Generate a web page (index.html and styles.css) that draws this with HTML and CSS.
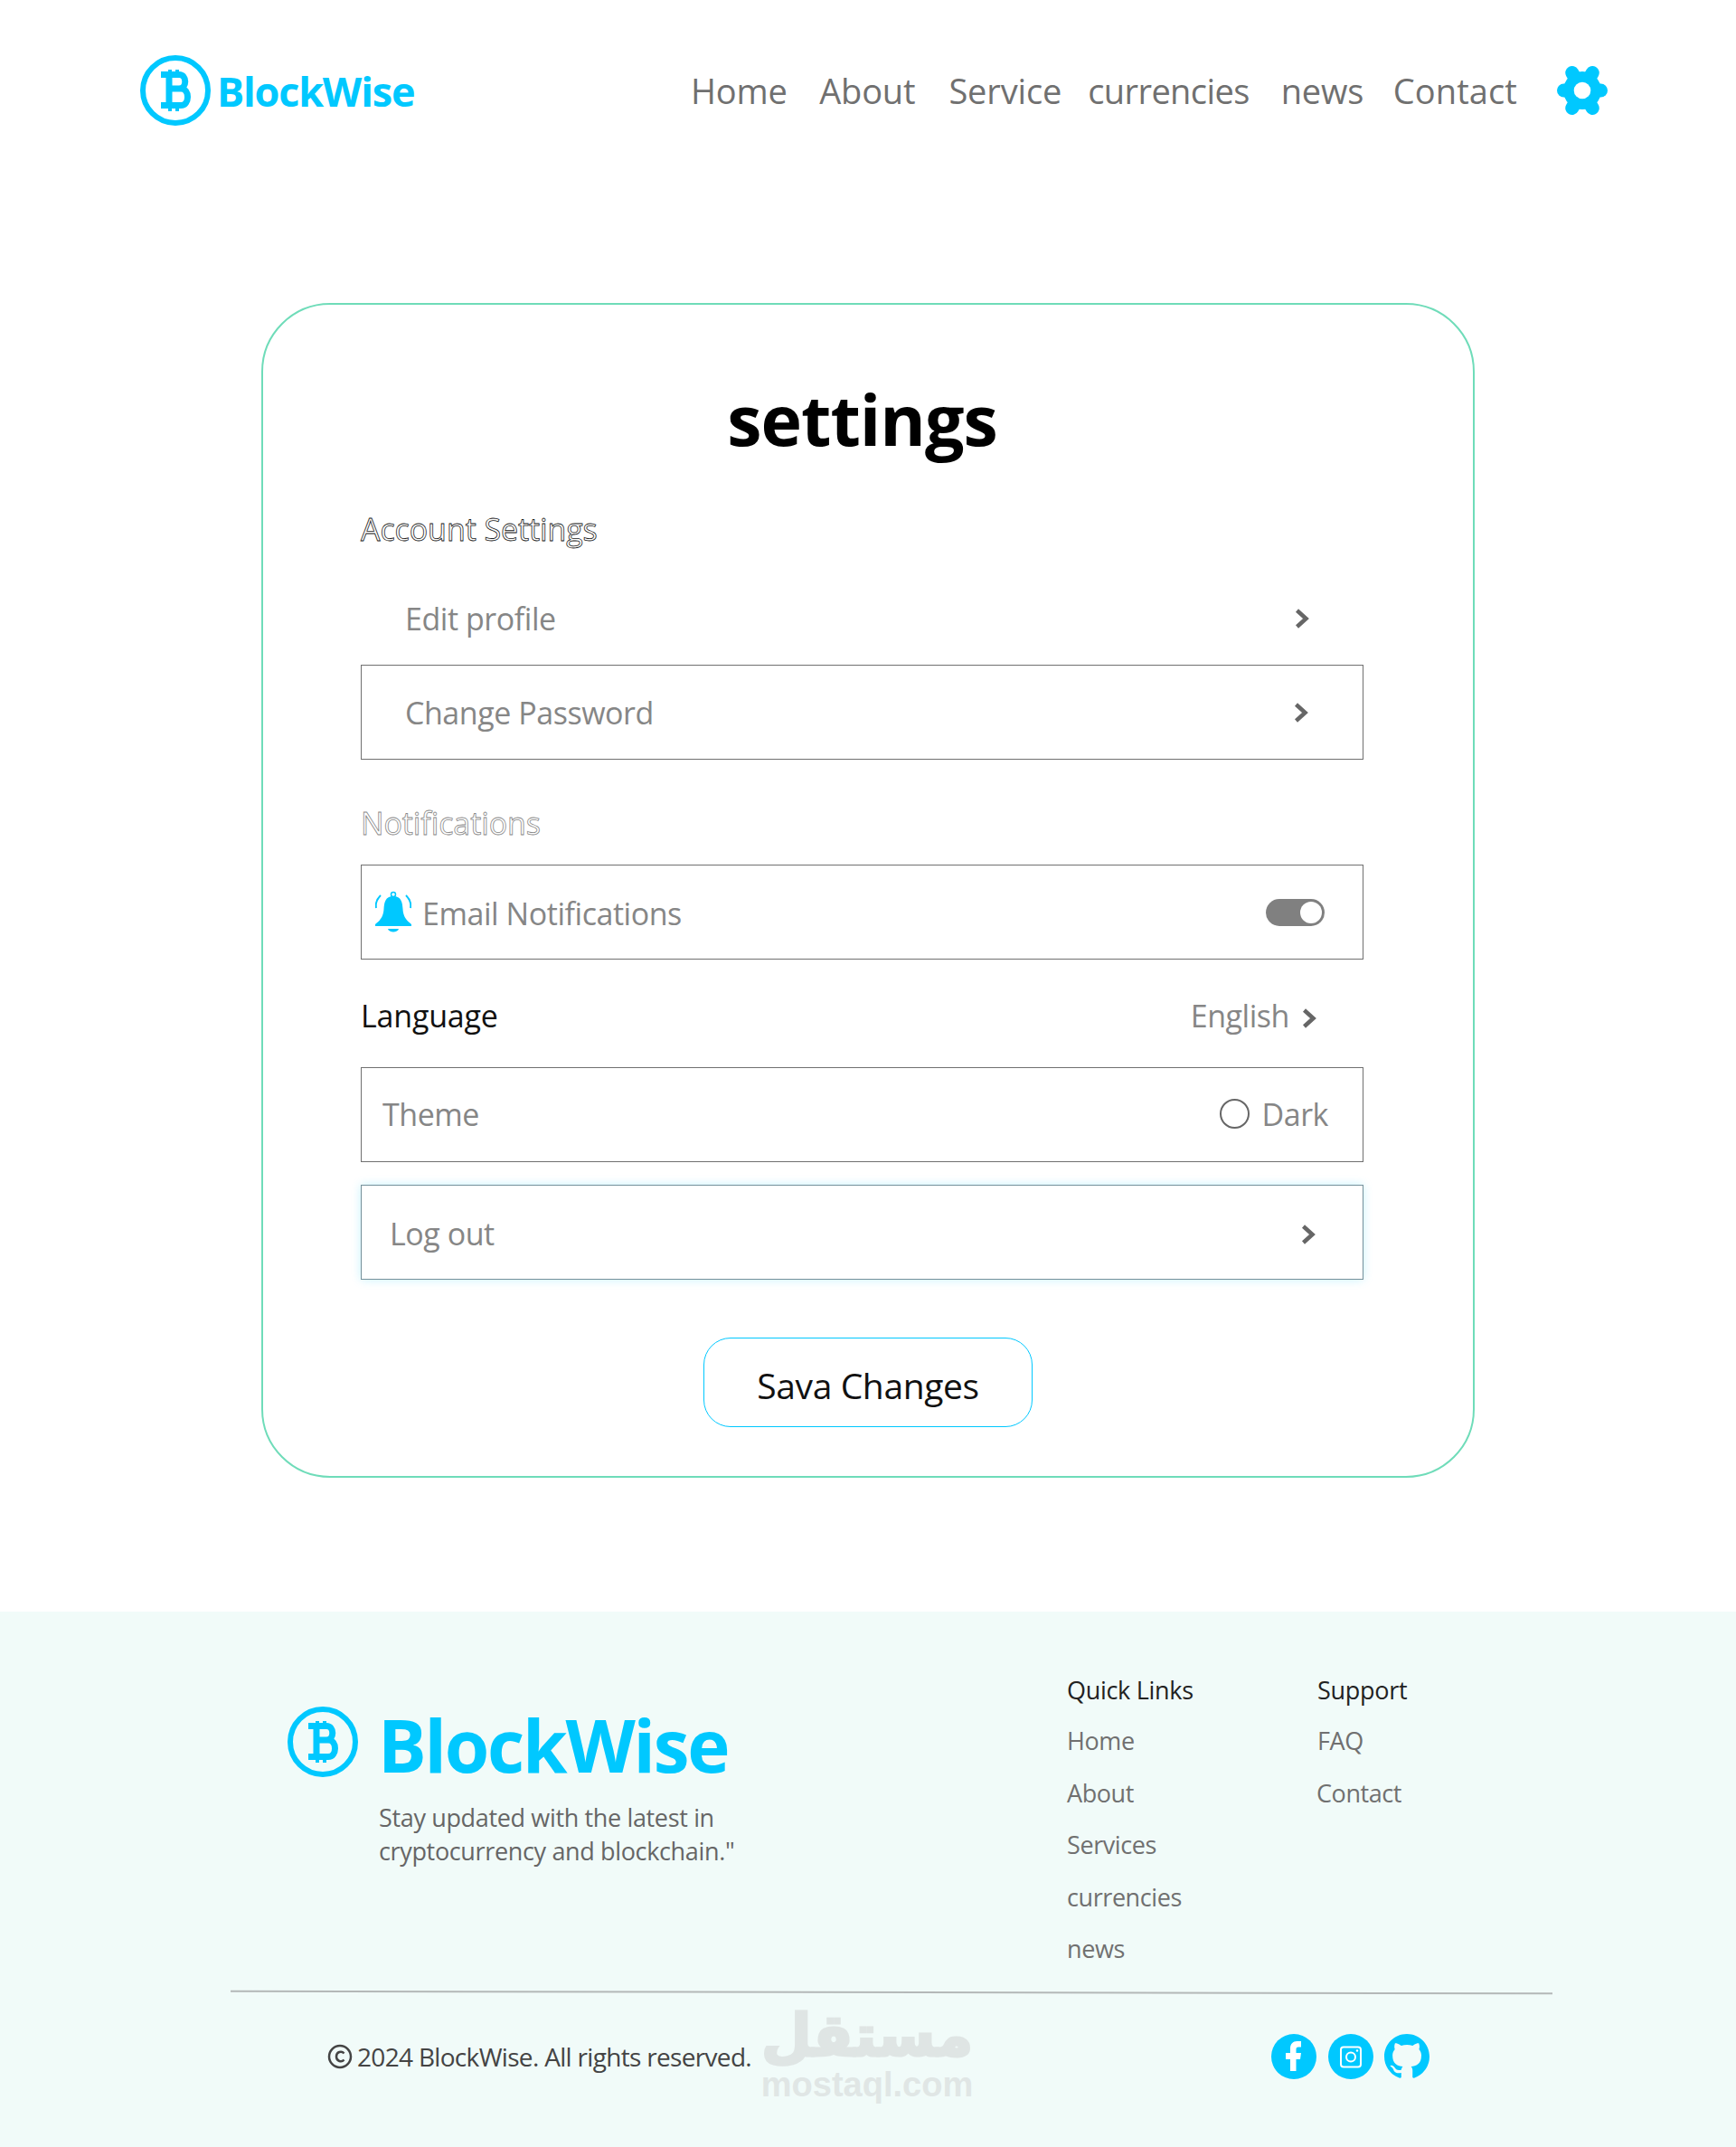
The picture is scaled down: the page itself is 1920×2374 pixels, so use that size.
FILE: index.html
```html
<!DOCTYPE html>
<html lang="en">
<head>
<meta charset="utf-8">
<title>BlockWise settings</title>
<link rel="stylesheet" href="styles.css">
</head>
<body>
<svg class="defs" width="0" height="0" aria-hidden="true">
  <symbol id="btc" viewBox="0 0 78 78">
    <circle cx="39" cy="39" r="36" fill="none" stroke="#00c8ff" stroke-width="6"/>
    <g fill="none" stroke="#00c8ff">
      <path stroke-width="7" d="M23 21.500H43C52 21.500 52 37 43 37H32M32 21.500V55.500M32 37H45C55 37 55 55.500 45 55.500H23"/>
      <path stroke-width="4" d="M33 16V22M41 16V22M33 55V62M41 55V62"/>
    </g>
  </symbol>
  <symbol id="chev" viewBox="0 0 16 24">
    <path d="M2.500 3L12.500 12L2.500 21" fill="none" stroke="#666" stroke-width="4.500"/>
  </symbol>
</svg>

<header class="top">
  <a class="logo">
    <svg class="logo-mark"><use href="#btc"/></svg>
    <span class="logo-text">BlockWise</span>
  </a>
  <nav class="nav">
    <a class="nav-home">Home</a>
    <a class="nav-about">About</a>
    <a class="nav-service">Service</a>
    <a class="nav-curr">currencies</a>
    <a class="nav-news">news</a>
    <a class="nav-contact">Contact</a>
    <svg class="gear" viewBox="0 0 56 56">
      <g stroke="#00c8ff" stroke-width="15" stroke-linecap="round">
        <path d="M7.500 28H48.500"/>
        <path d="M16.750 8.510L39.250 47.490"/>
        <path d="M39.250 8.510L16.750 47.490"/>
      </g>
      <circle cx="28" cy="28" r="21" fill="#00c8ff"/>
      <circle cx="28" cy="28" r="9.300" fill="#fff"/>
    </svg>
  </nav>
</header>

<main class="card">
  <h1 class="title">settings</h1>
  <h2 class="outline outline-dark">Account Settings</h2>
  <div class="row row-plain"><span>Edit profile</span><svg class="chev"><use href="#chev"/></svg></div>
  <div class="row row-box row-pw"><span>Change Password</span><svg class="chev"><use href="#chev"/></svg></div>
  <h2 class="outline outline-light">Notifications</h2>
  <div class="row row-box row-mail">
    <svg class="bell" viewBox="0 0 40 47">
      <circle cx="20" cy="4" r="2.500" fill="none" stroke="#00c8ff" stroke-width="1.500"/>
      <path fill="#00c8ff" d="M20 6C11 6 10 13 9.500 20C9 29 5 33 0 37V39H40V37C35 33 31 29 30.500 20C30 13 29 6 20 6Z"/>
      <path fill="#00c8ff" d="M14 42H26C25 46.500 15 46.500 14 42Z"/>
      <path fill="none" stroke="#00c8ff" stroke-width="2" d="M1 19C0 14 2 9 6 5M39 19C40 14 38 9 34 5"/>
    </svg>
    <span class="mail-label">Email Notifications</span>
    <span class="toggle"><i class="knob"></i></span>
  </div>
  <div class="row row-lang">
    <span class="lang-label">Language</span>
    <span class="lang-value">English</span>
    <svg class="chev chev-lang"><use href="#chev"/></svg>
  </div>
  <div class="row row-box row-theme">
    <span>Theme</span>
    <span class="theme-value"><i class="radio"></i>Dark</span>
  </div>
  <div class="row row-box row-logout"><span class="logout-label">Log out</span><svg class="chev"><use href="#chev"/></svg></div>
  <button class="save" type="button">Sava Changes</button>
</main>

<footer class="foot">
  <div class="foot-top">
    <div class="brand">
      <div class="brand-head">
        <svg class="logo-mark"><use href="#btc"/></svg>
        <span class="brand-name">BlockWise</span>
      </div>
      <p class="brand-desc">Stay updated with the latest in<br>cryptocurrency and blockchain."</p>
    </div>
    <ul class="links links-quick">
      <li class="links-title">Quick Links</li>
      <li>Home</li>
      <li>About</li>
      <li>Services</li>
      <li>currencies</li>
      <li>news</li>
    </ul>
    <ul class="links">
      <li class="links-title">Support</li>
      <li>FAQ</li>
      <li class="links-shift">Contact</li>
    </ul>
  </div>
  <div class="rule"></div>
  <div class="foot-bottom">
    <p class="copy"><svg class="copy-icon" viewBox="0 0 28 28">
      <circle cx="14" cy="14" r="12" fill="none" stroke="#444" stroke-width="2.500"/>
      <path d="M18.500 10.500C16 7.500 10 8.500 10 14C10 19.500 16 20.500 18.500 17.500" fill="none" stroke="#444" stroke-width="2.500"/>
    </svg>2024 BlockWise. All rights reserved.</p>
    <div class="social">
      <svg viewBox="0 0 50 50"><circle cx="25" cy="25" r="25" fill="#00c8ff"/><path fill="#fff" d="M21 41V28H16V21H21V16C21 11 24 8 28.500 8H33V14.500H30C28 14.500 27.500 15.500 27.500 17V21H33L32 28H27.500V41Z"/></svg>
      <svg viewBox="0 0 50 50"><circle cx="25" cy="25" r="25" fill="#00c8ff"/><rect x="14" y="14.500" width="22" height="22" rx="3" fill="none" stroke="#fff" stroke-width="2"/><circle cx="25" cy="25.500" r="5" fill="none" stroke="#fff" stroke-width="2"/><circle cx="32" cy="18.500" r="1.200" fill="#fff"/></svg>
      <svg viewBox="0 0 16 16"><path fill="#00c8ff" d="M8 0C3.580 0 0 3.580 0 8c0 3.540 2.290 6.530 5.470 7.590.4.070.55-.17.55-.38 0-.19-.01-.82-.01-1.490-2.010.37-2.530-.49-2.690-.94-.09-.23-.48-.94-.82-1.130-.28-.15-.68-.52-.01-.53.63-.01 1.080.58 1.230.82.72 1.210 1.870.87 2.330.66.070-.52.28-.87.51-1.070-1.780-.2-3.640-.89-3.640-3.950 0-.87.31-1.590.82-2.150-.08-.2-.36-1.020.08-2.120 0 0 .67-.21 2.200.82.64-.18 1.320-.27 2-.27.68 0 1.360.09 2 .27 1.530-1.040 2.200-.82 2.200-.82.44 1.100.16 1.920.08 2.120.51.56.82 1.270.82 2.150 0 3.070-1.870 3.750-3.650 3.950.29.25.54.73.54 1.480 0 1.070-.01 1.930-.01 2.200 0 .21.15.46.55.38A8.013 8.013 0 0016 8c0-4.420-3.580-8-8-8z"/></svg>
    </div>
  </div>
  <div class="watermark">
    <span class="wm-ar" lang="ar" dir="rtl">مستقل</span>
    <span class="wm-en">mostaql.com</span>
  </div>
</footer>
</body>
</html>
```
FILE: styles.css
```css
* { box-sizing: border-box; }
html, body { margin: 0; padding: 0; }
body { background: #fff; font-family: "Open Sans", "Noto Sans", sans-serif; color: #808080; }
.defs { position: absolute; }
a { text-decoration: none; color: inherit; }

.top { height: 200px; padding: 60px 142px 0 155px; display: flex; justify-content: space-between; align-items: flex-start; }
.logo { display: flex; align-items: center; gap: 7px; }
.logo-mark { width: 78px; height: 78px; flex: none; }
.logo-text { font-size: 45px; font-weight: 700; color: #00c8ff; letter-spacing: -1.200px; line-height: 78px; padding-top: 2px; }
.nav { display: flex; align-items: center; height: 78px; padding-top: 2px; font-size: 38px; color: #707070; letter-spacing: -.15px; }
.nav-about { margin-left: 35.500px; }
.nav-service { margin-left: 37px; }
.nav-curr { margin-left: 29px; letter-spacing: -.6px; }
.nav-news { margin-left: 35px; }
.nav-contact { margin-left: 32.500px; letter-spacing: .1px; }
.gear { width: 56px; height: 56px; margin-left: 44px; margin-top: -1px; }

.card { width: 1342px; height: 1299px; margin: 135px auto 0; padding: 79px 121px 0 108px; border: 2px solid #6fdcb9; border-radius: 76px; display: flex; flex-direction: column; }
.title { margin: 0; height: 100px; line-height: 96px; text-align: center; font-size: 77px; font-weight: 700; color: #000; letter-spacing: -1px; }
.outline { margin: 0; height: 50px; line-height: 50px; font-size: 34px; font-weight: 400; color: #fff; letter-spacing: -.1px; }
.outline-dark { margin-top: 44px; -webkit-text-stroke: .8px #222; }
.outline-light { margin-top: 45px; -webkit-text-stroke: .8px #888; }
.row { display: flex; align-items: center; font-size: 34px; color: #868686; letter-spacing: -.45px; }
.row-box { height: 105px; border: 1px solid #707070; }
.row-plain { height: 85px; margin-top: 40px; padding: 0 60px 18px 49px; justify-content: space-between; }
.row-pw { padding: 0 60px 0 48px; justify-content: space-between; }
.row-mail { margin-top: 21px; padding: 0 42px 0 15px; gap: 12px; }
.mail-label { padding-top: 3px; }
.bell { width: 40px; height: 47px; flex: none; }
.toggle { margin-left: auto; width: 65px; height: 30px; border-radius: 15px; background: #808080; position: relative; display: block; }
.knob { position: absolute; right: 3px; top: 3px; width: 24px; height: 24px; border-radius: 50%; background: #fff; }
.chev { width: 16px; height: 24px; flex: none; }
.row-lang { height: 60px; margin-top: 32px; padding-right: 52px; }
.lang-label { color: #111; font-size: 34px; letter-spacing: -.2px; }
.lang-value { margin-left: auto; }
.chev-lang { margin-left: 14px; margin-top: 6px; }
.row-theme { margin-top: 27px; padding: 0 38px 2px 23px; justify-content: space-between; }
.theme-value { display: flex; align-items: center; gap: 13px; }
.radio { width: 33px; height: 33px; border: 2px solid #666; border-radius: 50%; display: block; }
.row-logout { margin-top: 25px; padding: 0 52px 0 31px; justify-content: space-between; box-shadow: 0 0 10px rgba(0, 200, 255, .22); border-color: #74909a; }
.logout-label { padding-top: 3px; }
.row-logout .chev { margin-top: 5px; }
.save { width: 364px; height: 99px; margin: 64px 0 0 379px; border: 1px solid #00c8ff; border-radius: 30px; background: #fff; color: #111; font: 400 39px "Open Sans", sans-serif; letter-spacing: -.4px; padding: 6px 0 0; }

.foot { margin-top: 148px; height: 592px; background: #f1fbf9; padding: 58px 0 0 318px; position: relative; overflow: hidden; }
.foot-top { display: flex; }
.brand { width: 862px; padding-top: 43px; }
.brand-head { display: flex; align-items: flex-start; gap: 22px; }
.brand-head .logo-mark { margin-top: 4px; }
.brand-name { font-size: 80px; font-weight: 700; color: #00c8ff; letter-spacing: -2.200px; line-height: 90px; margin-top: 1px; }
.brand-desc { margin: 18px 0 0 101px; font-size: 27px; line-height: 36.500px; color: #666; letter-spacing: -.35px; }
.links { list-style: none; margin: 0; padding: 0; font-size: 27px; color: #707070; letter-spacing: -.42px; }
.links li { height: 57.500px; line-height: 57.500px; }
.links .links-title { color: #222; height: 56px; letter-spacing: -.3px; }
.links-quick { width: 277px; }
.links-shift { margin-left: -1px; }
.rule { width: 1462px; height: 2px; margin: 18.500px 0 0 -63px; background: #b4b8b8; transform: rotate(.1deg); }
.foot-bottom { display: flex; align-items: center; height: 100px; margin-top: 20px; padding-left: 44px; }
.copy { margin: 0; width: 1044px; display: flex; align-items: center; gap: 5px; font-size: 28px; color: #444; letter-spacing: -.68px; }
.copy-icon { width: 28px; height: 28px; flex: none; }
.social { display: flex; gap: 12.500px; }
.social svg { width: 50px; height: 50px; display: block; }
.watermark { position: absolute; left: 843px; top: 435px; width: 232px; display: flex; flex-direction: column; align-items: center; }
.wm-ar { font-family: "DejaVu Sans", sans-serif; font-weight: 700; font-size: 64px; line-height: 69px; color: #dfe5e4; -webkit-text-stroke: 3px #dfe5e4; }
.wm-en { font-family: "Liberation Sans", sans-serif; font-weight: 700; font-size: 38px; line-height: 38px; color: #e0e6e5; }
```
